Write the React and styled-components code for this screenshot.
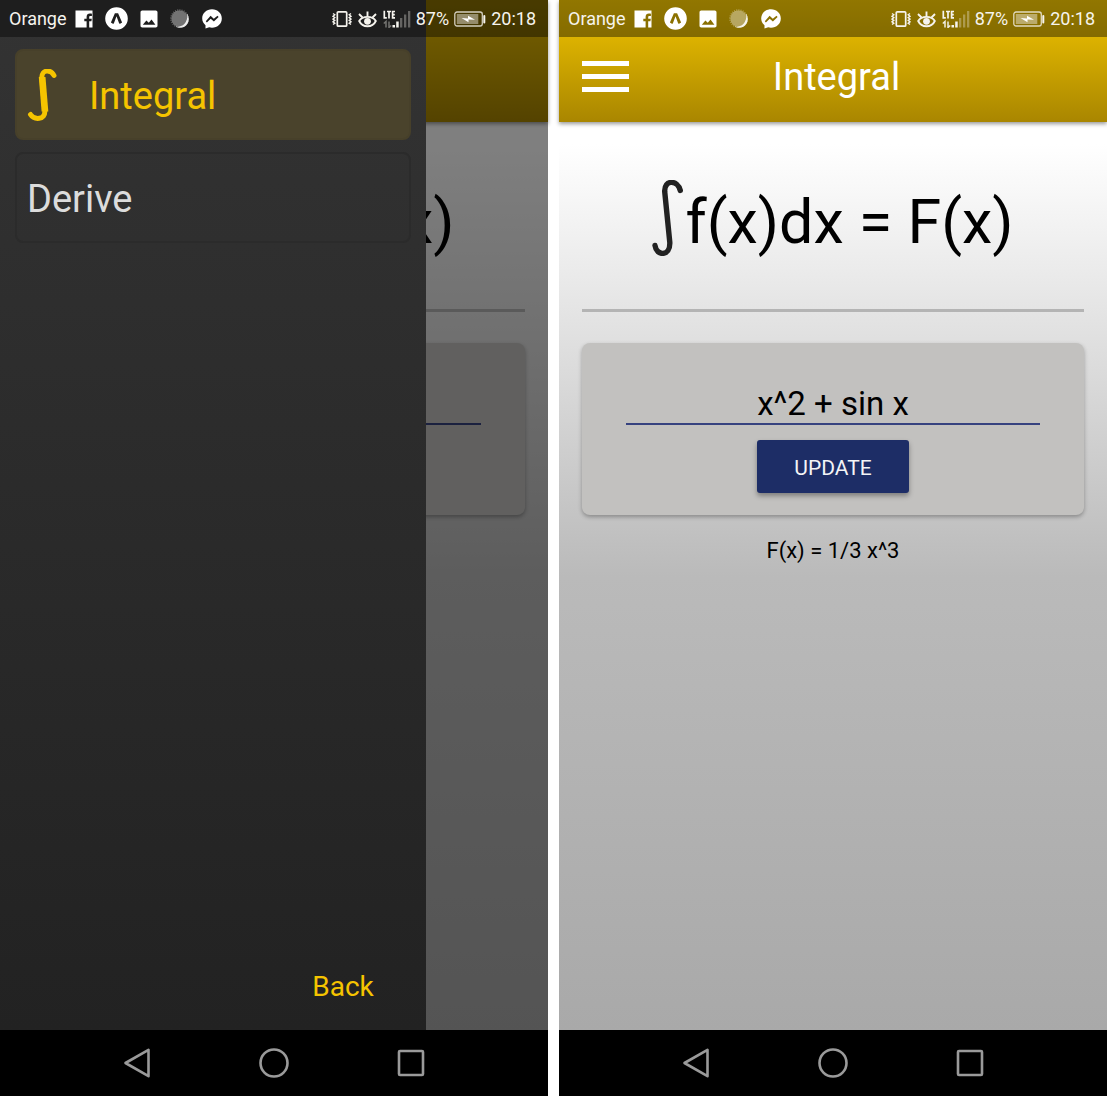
import React from "react";
import styled, { createGlobalStyle } from "styled-components";

const GlobalStyle = createGlobalStyle`
  *, *::before, *::after { box-sizing: border-box; }
  body {
    margin: 0;
    background: #ffffff;
    font-family: Roboto, "Liberation Sans", sans-serif;
  }
  button, input { font-family: inherit; }
`;

const Page = styled.main`
  display: grid;
  grid-template-columns: 1fr 1fr;
  gap: 11px;
  min-height: 100vh;
  padding-bottom: 1px;
`;

const Phone = styled.section`
  display: flex;
  flex-direction: column;
  background: #000000;
`;

const Screen = styled.div`
  position: relative;
  flex: 1;
  display: flex;
  flex-direction: column;
  background: linear-gradient(to bottom, #ffffff 14%, #bababa 56%, #a9a9a9 100%);
`;

/* Status bar, translucent over whatever the screen shows */
const StatusBar = styled.div`
  position: absolute;
  inset: 0 0 auto 0;
  z-index: 3;
  display: flex;
  justify-content: space-between;
  height: 37px;
  padding: 0 12px 0 9px;
  background: rgba(0, 0, 0, 0.4);
  color: #f6f4ee;
  font-size: 18px;
  line-height: 37px;
`;

const StatusGroup = styled.div`
  display: flex;
  align-items: center;
  gap: ${(p) => p.$gap}px;
`;

const Header = styled.header`
  display: grid;
  grid-template-columns: 47px 1fr 40px;
  align-items: center;
  height: 122px;
  padding: 37px 23px 6px;
  background: linear-gradient(to bottom, #f3c600, #a98600);
  box-shadow: 0 2px 4px rgba(0, 0, 0, 0.4);
`;

const MenuButton = styled.button`
  display: flex;
  flex-direction: column;
  gap: 8px;
  padding: 0;
  border: 0;
  background: none;
  cursor: pointer;
`;

const MenuBar = styled.span`
  width: 100%;
  height: 5px;
  background: #ffffff;
`;

const Title = styled.h1`
  margin: 0;
  color: #ffffff;
  font-size: 38px;
  font-weight: 400;
  line-height: 78px;
  text-align: center;
`;

const Body = styled.div`
  display: flex;
  flex-direction: column;
  padding: 58px 23px 0;
`;

const Formula = styled.div`
  display: flex;
  justify-content: center;
  padding-bottom: 45px;
  border-bottom: 3px solid #b4b4b4;
  color: #000000;
  font-size: 61px;
  line-height: 84px;
  white-space: nowrap;
`;

const Card = styled.form`
  display: flex;
  flex-direction: column;
  align-items: center;
  gap: 15px;
  margin-top: 31px;
  padding: 32px 44px 22px;
  border-radius: 8px;
  background: #c2c1bf;
  box-shadow: 0 2px 4px rgba(0, 0, 0, 0.3);
`;

const ExpressionInput = styled.input`
  width: 100%;
  height: 50px;
  padding: 8px 0 0;
  border: 0;
  border-bottom: 2px solid #36427f;
  border-radius: 0;
  outline: none;
  background: none;
  color: #000000;
  font-size: 33px;
  text-align: center;
`;

const UpdateButton = styled.button`
  height: 53px;
  padding: 2px 37px 0;
  border: 0;
  border-radius: 3px;
  background: #1d2d66;
  box-shadow: 0 3px 5px rgba(0, 0, 0, 0.35);
  color: #f4f4f6;
  font-size: 21px;
  cursor: pointer;
`;

const Result = styled.output`
  margin-top: 22px;
  color: #000000;
  font-size: 22px;
  line-height: 28px;
  text-align: center;
`;

/* Dark layer between the page and the open drawer */
const Scrim = styled.div`
  position: absolute;
  inset: 0;
  z-index: 1;
  background: rgba(0, 0, 0, 0.5);
`;

const Drawer = styled.aside`
  position: absolute;
  inset: 0 auto 0 0;
  z-index: 2;
  display: flex;
  flex-direction: column;
  justify-content: space-between;
  width: 77.7%;
  padding: 49px 15px 20px;
  background: linear-gradient(to bottom, #333333, #222222);
`;

const DrawerList = styled.nav`
  display: flex;
  flex-direction: column;
  gap: 12px;
`;

const DrawerItem = styled.a`
  display: flex;
  align-items: center;
  gap: 29px;
  height: 91px;
  padding: 2px 10px 0;
  border: 2px solid ${(p) => (p.$active ? "#47402a" : "#2b2b2b")};
  border-radius: 8px;
  background: ${(p) => (p.$active ? "#4a432c" : "transparent")};
  color: ${(p) => (p.$active ? "#f5c400" : "#dcdcdc")};
  font-size: 38px;
  text-decoration: none;
`;

const BackButton = styled.button`
  align-self: flex-end;
  padding: 6px 37px;
  border: 0;
  background: none;
  color: #f5c400;
  font-size: 28px;
  line-height: 34px;
  cursor: pointer;
`;

const NavBar = styled.nav`
  display: grid;
  grid-template-columns: repeat(3, 1fr);
  justify-items: center;
  align-items: center;
  height: 66px;
  padding: 0 12.5%;
  background: #000000;
`;

const NavButton = styled.button`
  display: flex;
  padding: 0;
  border: 0;
  background: none;
  color: #9a9a9a;
  cursor: pointer;
`;

const Icon = ({ w, h, children }) => (
  <svg width={w} height={h} viewBox={`0 0 ${w} ${h}`} fill="none" aria-hidden="true">
    {children}
  </svg>
);

const FacebookIcon = () => (
  <Icon w={18} h={18}>
    <path
      fill="#fff"
      fillRule="evenodd"
      d="M.5.5h17v17h-3.300v-6.300h2.200l.4-2.500h-2.600V7.200c0-.8.300-1.200 1.300-1.200h1.400V3.700c-.4-.1-1.100-.1-2-.1-2 0-3.300 1.200-3.300 3.300v1.800H9.300v2.500h2.300v6.300H.5z"
    />
  </Icon>
);

const ExpoIcon = () => (
  <Icon w={23} h={23}>
    <path
      fill="#fff"
      fillRule="evenodd"
      d="M11.500.2a11.300 11.300 0 1 1 0 22.600 11.300 11.300 0 0 1 0-22.600zM9.900 6.200h3.200l4 9.300-2 1.300c-.5 0-.8-.2-1.100-.9l-2.500-6.700L9 15.900c-.3.700-.6.900-1.100.9l-2-1.300z"
    />
  </Icon>
);

const PhotoIcon = () => (
  <Icon w={18} h={18}>
    <path
      fill="#fff"
      fillRule="evenodd"
      d="M2.200.5h13.600c.9 0 1.700.8 1.700 1.700v13.600c0 .9-.8 1.700-1.700 1.700H2.200c-.9 0-1.700-.8-1.700-1.700V2.200C.5 1.300 1.300.5 2.200.5zM2.800 14.800h12.600l-3.900-5.300-2.700 3.300-2.400-2.200z"
    />
  </Icon>
);

const SyncIcon = () => (
  <Icon w={20} h={20}>
    <circle cx="9.500" cy="9.500" r="8" fill="#fff" opacity=".38" />
    <circle cx="9.500" cy="9.500" r="8.500" stroke="#fff" strokeOpacity=".3" strokeWidth="1.600" strokeDasharray="1.200 1" />
    <path fill="#fff" opacity=".9" d="M16.500 4C20.500 9 19 15 14.500 17.800 11.500 19.500 8 19 5.500 17.500 10 18.200 14 16.500 15.800 13 17.500 10 17.800 7 16.500 4z" />
  </Icon>
);

const MessengerIcon = () => (
  <Icon w={20} h={20}>
    <path
      fill="#fff"
      fillRule="evenodd"
      d="M10 .3c5.600 0 9.800 4 9.800 9.200s-4.200 9.200-9.800 9.200c-1 0-1.900-.1-2.800-.4l-3.700 1.200v-3.200C1.500 14.500.2 12.200.2 9.500.2 4.300 4.400.3 10 .3zM3.800 12.200l1.100 1.300 3.800-3.800 3.200 2.700 4.700-4.400-1.100-1.300-3.700 3-3.200-2.900z"
    />
  </Icon>
);

const VibrateIcon = () => (
  <Icon w={20} h={18}>
    <rect x="5.300" y="1.800" width="9.400" height="14.400" rx="1" stroke="#f6f4ee" strokeWidth="1.700" />
    <path stroke="#f6f4ee" strokeWidth="1.400" d="M1 3.500l1.800 1.300L1 6.300l1.800 1.300L1 9.100l1.800 1.300L1 11.900l1.800 1.300L1 14.500M19 3.500l-1.800 1.300L19 6.300l-1.800 1.300L19 9.100l-1.800 1.300 1.800 1.500-1.800 1.300 1.800 1.300" />
  </Icon>
);

const EyeIcon = () => (
  <Icon w={19} h={18}>
    <path stroke="#f6f4ee" strokeWidth="1.900" d="M1.200 11C4.500 5.500 14.500 5.500 17.800 11 14.500 18 4.500 18 1.200 11z" />
    <circle cx="9.500" cy="11.300" r="3.400" fill="#f6f4ee" />
    <path stroke="#f6f4ee" strokeWidth="1.900" d="M9.500 1.500v5M1 4l3.500 3.500M18 4l-3.500 3.500" />
  </Icon>
);

const SignalIcon = ({ dim }) => (
  <Icon w={28} h={18}>
    <path stroke="#f6f4ee" strokeWidth="1.700" d="M1.300.8v7h2.500M4 1.500h4M6 1.500v7M12 1.500H9.600v6.300H12M9.600 4.600h2.200" />
    <path stroke="#f6f4ee" strokeOpacity={dim ? 0.4 : 0.95} strokeWidth="1.500" d="M3 17.500V11.500L.8 13.500M6 11.500v6l2.200-2" />
    <path fill="#f6f4ee" d="M9.500 15h2.500v2.500H9.500zM13.200 11.500h2.500v6h-2.500z" />
    <path fill="#f6f4ee" opacity=".33" d="M17 8h2.300v9.500H17zM21 4.500h2.300v13H21zM25 1h2.300v16.500H25z" />
  </Icon>
);

const BatteryIcon = () => (
  <Icon w={32} h={16}>
    <rect x=".8" y="1" width="27.500" height="14" rx="2.200" stroke="#f6f4ee" strokeOpacity=".8" strokeWidth="1.300" />
    <rect x="2.800" y="3" width="21.500" height="10" fill="#f6f4ee" opacity=".45" />
    <path fill="#fff" d="M7.500 7l6.500.6V4.800l7 4-6.500-.4v2.800z" />
    <rect x="29.300" y="4" width="2" height="8.500" rx="1" fill="#f6f4ee" />
  </Icon>
);

const FormulaIntegral = () => (
  <Icon w={33} h={76}>
    <path
      stroke="#222222"
      strokeWidth="5.400"
      strokeLinecap="round"
      d="M28.300 10.500C25.500-.5 12.200-.5 12.700 11.500L17.800 62.500C18.300 76.500 4.500 76.500 3 65.500"
    />
  </Icon>
);

const MenuIntegral = () => (
  <Icon w={33} h={54}>
    <path
      stroke="currentColor"
      strokeWidth="5"
      strokeLinecap="round"
      d="M27 6.500C24 .5 14.500 0 14.800 9L17.800 41.500C18.500 51.500 7 51 3.500 45.500"
    />
    <path fill="currentColor" d="M11.800 8H18.500L21.300 42.500H14.600z" />
  </Icon>
);

const StatusContent = ({ dimArrows }) => (
  <StatusBar>
    <StatusGroup $gap={8}>
      <span>Orange</span>
      <StatusGroup $gap={12}>
        <FacebookIcon />
        <ExpoIcon />
        <PhotoIcon />
        <SyncIcon />
        <MessengerIcon />
      </StatusGroup>
    </StatusGroup>
    <StatusGroup $gap={5}>
      <StatusGroup $gap={6}>
        <VibrateIcon />
        <EyeIcon />
        <SignalIcon dim={dimArrows} />
      </StatusGroup>
      <span>87%</span>
      <BatteryIcon />
      <span>20:18</span>
    </StatusGroup>
  </StatusBar>
);

const Calculator = () => (
  <>
    <Header>
      <MenuButton type="button" aria-label="Menu">
        <MenuBar />
        <MenuBar />
        <MenuBar />
      </MenuButton>
      <Title>Integral</Title>
    </Header>
    <Body>
      <Formula>
        <FormulaIntegral />
        <span>f(x)dx = F(x)</span>
      </Formula>
      <Card onSubmit={(e) => e.preventDefault()}>
        <ExpressionInput aria-label="f(x)" defaultValue="x^2 + sin x" />
        <UpdateButton type="submit">UPDATE</UpdateButton>
      </Card>
      <Result>F(x) = 1/3 x^3</Result>
    </Body>
  </>
);

const SystemNav = () => (
  <NavBar>
    <NavButton type="button" aria-label="Back">
      <Icon w={30} h={30}>
        <path stroke="currentColor" strokeWidth="2.600" strokeLinejoin="round" d="M26.500 1.800v26.400L3.500 15z" />
      </Icon>
    </NavButton>
    <NavButton type="button" aria-label="Home">
      <Icon w={30} h={30}>
        <circle cx="15" cy="15" r="13.500" stroke="currentColor" strokeWidth="2.600" />
      </Icon>
    </NavButton>
    <NavButton type="button" aria-label="Recent apps">
      <Icon w={30} h={30}>
        <rect x="3" y="3" width="24" height="24" rx="1" stroke="currentColor" strokeWidth="2.600" />
      </Icon>
    </NavButton>
  </NavBar>
);

export default function App() {
  return (
    <>
      <GlobalStyle />
      <Page>
        <Phone>
          <Screen>
            <Calculator />
            <Scrim />
            <Drawer>
              <DrawerList>
                <DrawerItem href="#integral" $active>
                  <MenuIntegral />
                  Integral
                </DrawerItem>
                <DrawerItem href="#derive">Derive</DrawerItem>
              </DrawerList>
              <BackButton type="button">Back</BackButton>
            </Drawer>
            <StatusContent dimArrows />
          </Screen>
          <SystemNav />
        </Phone>
        <Phone>
          <Screen>
            <Calculator />
            <StatusContent />
          </Screen>
          <SystemNav />
        </Phone>
      </Page>
    </>
  );
}
